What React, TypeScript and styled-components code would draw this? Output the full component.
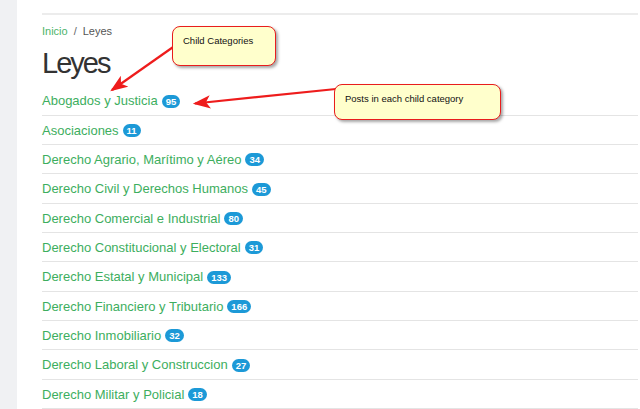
import React, { FC } from 'react';
import styled, { createGlobalStyle } from 'styled-components';

type Category = {
  name: string;
  count: number;
};

const categories: Category[] = [
  { name: 'Abogados y Justicia', count: 95 },
  { name: 'Asociaciones', count: 11 },
  { name: 'Derecho Agrario, Marítimo y Aéreo', count: 34 },
  { name: 'Derecho Civil y Derechos Humanos', count: 45 },
  { name: 'Derecho Comercial e Industrial', count: 80 },
  { name: 'Derecho Constitucional y Electoral', count: 31 },
  { name: 'Derecho Estatal y Municipal', count: 133 },
  { name: 'Derecho Financiero y Tributario', count: 166 },
  { name: 'Derecho Inmobiliario', count: 32 },
  { name: 'Derecho Laboral y Construccion', count: 27 },
  { name: 'Derecho Militar y Policial', count: 18 },
];

const App: FC = (): JSX.Element => {
  return (
    <>
      <GlobalStyle />
      <Page>
        <Sidebar />
        <Main>
          <TopRule />
          <Breadcrumb>
            <CrumbLink href="#">Inicio</CrumbLink>
            <CrumbSep>/</CrumbSep>
            <CrumbCurrent>Leyes</CrumbCurrent>
          </Breadcrumb>
          <Title>Leyes</Title>
          <CategoryList>
            {categories.map((cat) => (
              <CategoryRow key={cat.name}>
                <CategoryLink href="#">{cat.name}</CategoryLink>
                <Badge>{cat.count}</Badge>
              </CategoryRow>
            ))}
          </CategoryList>
        </Main>

        {/* annotation layer */}
        <Arrows width="640" height="409" viewBox="0 0 640 409">
          <defs>
            <marker id="head" markerWidth="8" markerHeight="6" refX="7" refY="3" orient="auto" markerUnits="strokeWidth">
              <path d="M0,0 L8,3 L0,6 L2,3 Z" fill="#ee1c1c" />
            </marker>
          </defs>
          <line x1="176" y1="45" x2="112" y2="90" stroke="#ee1c1c" strokeWidth="2.2" markerEnd="url(#head)" />
          <line x1="336" y1="89" x2="195" y2="103.5" stroke="#ee1c1c" strokeWidth="2.2" markerEnd="url(#head)" />
        </Arrows>
        <Callout left={172} top={26} width={104} height={40}>
          Child Categories
        </Callout>
        <Callout left={334} top={84} width={167} height={36}>
          Posts in each child category
        </Callout>
      </Page>
    </>
  );
};

const GlobalStyle = createGlobalStyle`
  * {
    box-sizing: border-box;
  }

  body {
    margin: 0;
    background: #ffffff;
    font-family: 'Liberation Sans', Arial, sans-serif;
  }
`;

const Page = styled.div`
  position: relative;
  display: flex;
  width: 640px;
  height: 409px;
  overflow: hidden;
  background: #ffffff;
`;

const Sidebar = styled.div`
  width: 17px;
  flex-shrink: 0;
  background: #f0f1f3;
`;

const Main = styled.div`
  flex: 1;
  display: flex;
  flex-direction: column;
  padding: 13px 2px 0 25px;
`;

const TopRule = styled.div`
  height: 2px;
  background: #ececec;
`;

const Breadcrumb = styled.div`
  display: flex;
  align-items: center;
  margin-top: 10px;
  height: 16px;
  font-size: 11px;
  color: #555555;
`;

const CrumbLink = styled.a`
  color: #4cb46a;
  text-decoration: none;
`;

const CrumbSep = styled.span`
  margin: 0 6px;
  color: #666666;
`;

const CrumbCurrent = styled.span`
  color: #555555;
`;

const Title = styled.h1`
  margin: 9px 0 6px;
  font-size: 29px;
  line-height: 34px;
  font-weight: 400;
  letter-spacing: -2px;
  color: #333333;
`;

const CategoryList = styled.ul`
  list-style: none;
  margin: 0;
  padding: 0;
`;

const CategoryRow = styled.li`
  display: flex;
  align-items: center;
  padding: 6px 0 5px;
  line-height: 17.33px;
  border-bottom: 1px solid #e4e4e4;
`;

const CategoryLink = styled.a`
  font-size: 13px;
  color: #3dae5e;
  text-decoration: none;
`;

const Badge = styled.span`
  display: inline-flex;
  align-items: center;
  justify-content: center;
  height: 13px;
  min-width: 18px;
  margin-left: 4px;
  padding: 0 4px;
  border-radius: 7px;
  background: #1c99d7;
  color: #ffffff;
  font-size: 9.5px;
  font-weight: 700;
  line-height: 13px;
`;

const Arrows = styled.svg`
  position: absolute;
  left: 0;
  top: 0;
  pointer-events: none;
`;

interface CalloutProps {
  left: number;
  top: number;
  width: number;
  height: number;
}

const Callout = styled.div<CalloutProps>`
  position: absolute;
  left: ${({ left }) => left}px;
  top: ${({ top }) => top}px;
  width: ${({ width }) => width}px;
  height: ${({ height }) => height}px;
  padding: 8px 10px;
  border: 1.5px solid #e81d1d;
  border-radius: 8px;
  background: #ffffcc;
  box-shadow: 2px 2px 3px rgba(0, 0, 0, 0.35);
  font-family: 'Liberation Sans', Arial, sans-serif;
  font-size: 9.5px;
  line-height: 12px;
  color: #111111;
`;

export default App;
